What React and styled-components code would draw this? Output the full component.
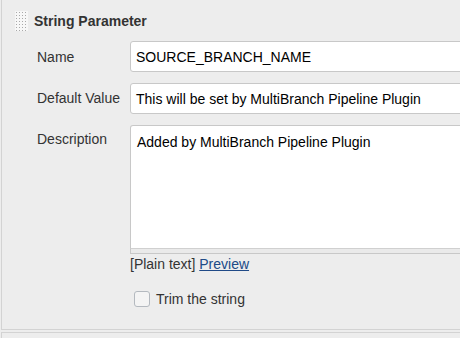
import React from "react";
import styled, { createGlobalStyle } from "styled-components";

const Global = createGlobalStyle`
  html, body { margin: 0; padding: 0; background: #ededed; overflow: hidden; }
  body { font-family: "Liberation Sans", Arial, sans-serif; color: #333; }
`;

const Viewport = styled.div`
  width: 100vw;
  height: 100vh;
  overflow: hidden;
`;

const Page = styled.div`
  width: 640px;
  padding-left: 1px;
`;

const Panel = styled.section`
  border: 1px solid #d3d3d3;
  border-top: none;
  background: #ededed;
  padding: 11px 0 22px 0;
`;

const NextPanel = styled.div`
  margin-top: 2px;
  height: 20px;
  border: 1px solid #d3d3d3;
  border-bottom: none;
`;

const Header = styled.div`
  display: flex;
  align-items: center;
  gap: 6px;
  padding-left: 13px;
  height: 20px;
`;

const Grip = styled.span`
  width: 13px;
  height: 20px;
  background-color: #f7f7f7;
  background-image: radial-gradient(circle, #a9a9a9 0.8px, transparent 1px);
  background-size: 3px 3px;
  background-position: 0 0;
`;

const Title = styled.h3`
  margin: 0;
  font-size: 14px;
  font-weight: bold;
  color: #333;
`;

const Form = styled.div`
  display: grid;
  grid-template-columns: 93px 1fr;
  row-gap: 11px;
  padding-left: 35px;
  margin-top: 10px;
`;

const Label = styled.div`
  font-size: 14px;
  color: #333;
  padding-top: ${(p) => p.$top}px;
`;

const Input = styled.div`
  height: 29px;
  box-sizing: content-box;
  border: 1px solid #c8c8c8;
  border-radius: 3px;
  background: #fff;
  display: flex;
  align-items: center;
  padding-left: 5px;
  font-size: 14px;
  color: #000;
`;

const TextArea = styled.div`
  height: 114px;
  border: 1px solid #c8c8c8;
  border-bottom-color: #d0d0d0;
  border-radius: 3px 3px 0 0;
  background: #fff;
  padding: 8px 0 0 6px;
  font-size: 14px;
  color: #000;
  line-height: 16px;
`;

const Handle = styled.div`
  height: 4px;
  border: 1px solid #c8c8c8;
  border-top: none;
  background: #eaeaea;
`;

const Hint = styled.div`
  font-size: 14px;
  color: #333;
  margin-top: 2px;
  line-height: 16px;
`;

const Link = styled.a`
  color: #204a87;
  text-decoration: underline;
`;

const CheckRow = styled.label`
  display: flex;
  align-items: center;
  gap: 6px;
  margin-top: 19px;
  padding-left: 4px;
  font-size: 14px;
  color: #333;
`;

const Box = styled.span`
  width: 14px;
  height: 14px;
  border: 1px solid #b4b9bf;
  border-radius: 3px;
  background: #f4f4f4;
`;

export default function App() {
  return (
    <Viewport>
      <Global />
      <Page>
        <Panel>
          <Header>
            <Grip />
            <Title>String Parameter</Title>
          </Header>
          <Form>
            <Label $top={8}>Name</Label>
            <Input>SOURCE_BRANCH_NAME</Input>
            <Label $top={7}>Default Value</Label>
            <Input>This will be set by MultiBranch Pipeline Plugin</Input>
            <Label $top={6}>Description</Label>
            <div>
              <TextArea>Added by MultiBranch Pipeline Plugin</TextArea>
              <Handle />
              <Hint>
                [Plain text] <Link href="#">Preview</Link>
              </Hint>
              <CheckRow>
                <Box />
                Trim the string
              </CheckRow>
            </div>
          </Form>
        </Panel>
        <NextPanel />
      </Page>
    </Viewport>
  );
}
